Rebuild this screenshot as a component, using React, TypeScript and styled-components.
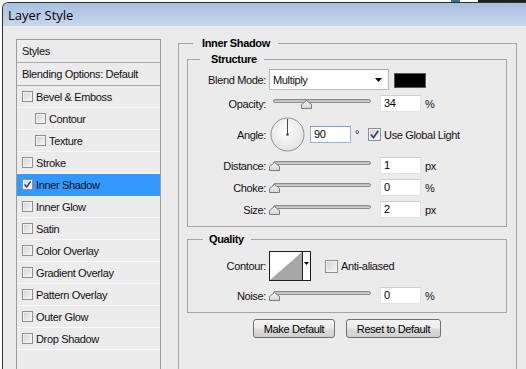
import React from "react";
import styled, { createGlobalStyle } from "styled-components";

const GlobalStyle = createGlobalStyle`
  html, body {
    margin: 0;
    padding: 0;
    background: #fff;
    overflow: hidden;
  }
  body {
    font-family: "Liberation Sans", Arial, sans-serif;
    font-size: 11px;
    letter-spacing: -0.35px;
    color: #111;
  }
`;

const Screen = styled.div`
  width: 526px;
  height: 369px;
  overflow: hidden;
`;

const Backdrop = styled.div`
  display: flex;
  height: 2px;
`;

const BackdropPiece = styled.div<{ $w: number; $c: string }>`
  width: ${(p) => p.$w}px;
  background: ${(p) => p.$c};
`;

const Window = styled.div`
  margin-left: 2px;
  width: 560px;
  height: 367px;
  border-top: 1px solid #2e3236;
  border-left: 1px solid #2e3236;
  border-top-left-radius: 6px;
  overflow: hidden;
  background: #ebebeb;
  display: flex;
  flex-direction: column;
`;

const TitleBar = styled.div`
  height: 23px;
  flex: none;
  display: flex;
  align-items: center;
  padding-left: 5px;
  background: linear-gradient(to bottom, #a8c0de 0%, #b8cce5 55%, #c7d8ec 100%);
  font-family: "Open Sans", "Noto Sans", sans-serif;
  font-size: 13px;
  letter-spacing: 0;
  color: #000;
`;

const Body = styled.div`
  flex: 1;
  display: flex;
  align-items: flex-start;
  padding: 10px 0 0 13px;
`;

const StylesPanel = styled.div`
  flex: none;
  width: 145px;
  height: 340px;
  margin-top: 3px;
  box-sizing: border-box;
  border: 1px solid #9c9c9c;
  background: #ececec;
`;

const PanelHeader = styled.div`
  height: 22px;
  line-height: 22px;
  padding-left: 5px;
  border-bottom: 1px solid #a9a9a9;
`;

const StyleItem = styled.div<{ $level: number; $active?: boolean }>`
  height: 21px;
  display: flex;
  align-items: center;
  gap: 3px;
  padding-left: ${(p) => 5 + p.$level * 13}px;
  border-bottom: 1px solid ${(p) => (p.$active ? "#3399ff" : "#fafafa")};
  background: ${(p) => (p.$active ? "#3399ff" : "transparent")};
`;

const Box = styled.span<{ $size?: number; $ml?: number }>`
  flex: none;
  width: ${(p) => p.$size ?? 11}px;
  height: ${(p) => p.$size ?? 11}px;
  margin-left: ${(p) => p.$ml ?? 0}px;
  box-sizing: border-box;
  border: 1px solid #8e8f8f;
  box-shadow: inset 0 0 0 1px #f2f2f2;
  background: linear-gradient(135deg, #d2d2d2 0%, #f7f7f7 100%);
  display: inline-flex;
  align-items: center;
  justify-content: center;
`;

const Group = styled.fieldset<{ $outer?: boolean; $pad: string; $mt: number }>`
  margin: ${(p) => p.$mt}px 0 0 0;
  min-width: 0;
  border: 1px solid #a4a4a4;
  padding: ${(p) => p.$pad};
  ${(p) =>
    p.$outer &&
    `
    flex: none;
    margin-left: 17px;
    width: 339px;
    height: 345px;
    box-sizing: border-box;
  `}
`;

const GroupTitle = styled.legend<{ $ml: number; $pl: number; $pr: number }>`
  font-weight: bold;
  line-height: 14px;
  height: 14px;
  margin-left: ${(p) => p.$ml}px;
  padding: 0 ${(p) => p.$pr}px 0 ${(p) => p.$pl}px;
  color: #000;
`;

const Rows = styled.div<{ $gap: number }>`
  display: flex;
  flex-direction: column;
  gap: ${(p) => p.$gap}px;
`;

const Row = styled.div<{ $h: number }>`
  display: flex;
  align-items: center;
  height: ${(p) => p.$h}px;
`;

const Label = styled.span`
  flex: none;
  width: 78px;
  margin-right: 3px;
  text-align: right;
`;

const Select = styled.div`
  flex: none;
  width: 120px;
  height: 21px;
  box-sizing: border-box;
  border: 1px solid #b9b9b9;
  border-top-color: #a9a9a9;
  background: #fff;
  display: flex;
  align-items: center;
  justify-content: space-between;
  padding: 0 6px 0 3px;
`;

const Swatch = styled.div`
  flex: none;
  width: 32px;
  height: 15px;
  margin-left: 5px;
  margin-top: 2px;
  box-sizing: border-box;
  border: 1px solid #5a5a5a;
  background: #000;
`;

const Slider = styled.div`
  flex: none;
  position: relative;
  width: 104px;
  height: 17px;
  padding-top: 4px;
  box-sizing: border-box;
`;

const Track = styled.div`
  height: 4px;
  margin: 0 2px 0 4px;
  box-sizing: border-box;
  border: 1px solid #8c8c8c;
  border-radius: 2px;
  background: linear-gradient(to bottom, #b4b4b4, #d6d6d6);
`;

const Thumb = styled.svg`
  position: absolute;
  top: 5px;
`;

const NumBox = styled.div<{ $focus?: boolean; $ml?: number }>`
  flex: none;
  width: 41px;
  height: 17px;
  margin-left: ${(p) => p.$ml ?? 7}px;
  box-sizing: border-box;
  border: 1px solid ${(p) => (p.$focus ? "#8fb3d9" : "#e3e3e3")};
  border-top-color: ${(p) => (p.$focus ? "#7a9fcb" : "#cfcfcf")};
  background: #fff;
  padding-left: 3px;
  line-height: 15px;
  color: #000;
`;

const Unit = styled.span<{ $ml?: number }>`
  margin-left: ${(p) => p.$ml ?? 4}px;
`;

const Degree = styled.span`
  margin: 0 9px 0 4px;
  align-self: flex-start;
  margin-top: 11px;
`;

const Dial = styled.svg`
  flex: none;
  margin-left: 1px;
`;

const Contour = styled.div`
  flex: none;
  width: 42px;
  height: 30px;
  box-sizing: border-box;
  border: 1px solid #1e1e1e;
  display: flex;
  background: #fff;
`;

const ContourArrow = styled.div`
  flex: none;
  width: 8px;
  border-left: 1px solid #1e1e1e;
  display: flex;
  justify-content: center;
  padding-top: 10px;
  box-sizing: border-box;
`;

const CheckText = styled.span`
  margin-left: 3px;
`;

const ButtonRow = styled.div`
  display: flex;
  justify-content: center;
  gap: 11px;
  margin-top: 6px;
`;

const Button = styled.button<{ $w: number }>`
  width: ${(p) => p.$w}px;
  height: 19px;
  padding: 0;
  border: 1px solid #707070;
  border-radius: 3px;
  background: linear-gradient(to bottom, #f3f3f3 0%, #ebebeb 48%, #dddddd 52%, #cfcfcf 100%);
  font-family: inherit;
  font-size: 11px;
  letter-spacing: inherit;
  color: #000;
`;

const CheckMark = ({ size }: { size: number }) => (
  <svg width={size - 2} height={size - 2} viewBox="0 0 9 9">
    <path d="M1.5 4.5 L3.7 7 L7.6 1.5" fill="none" stroke="#2b4a8a" strokeWidth="1.5" />
  </svg>
);

const CheckBox = ({ checked, size = 11, ml }: { checked?: boolean; size?: number; ml?: number }) => (
  <Box $size={size} $ml={ml}>{checked && <CheckMark size={size} />}</Box>
);

const ValueSlider = ({ value }: { value: number }) => (
  <Slider>
    <Track />
    <Thumb width="11" height="9" viewBox="0 0 11 9" style={{ left: (value / 100) * 93 }}>
      <defs>
        <linearGradient id="thumbFill" x1="0" y1="0" x2="0" y2="1">
          <stop offset="0" stopColor="#f7f7f7" />
          <stop offset="1" stopColor="#d4d4d4" />
        </linearGradient>
      </defs>
      <polygon points="5.5,0.5 10.5,4.5 10.5,8.5 0.5,8.5 0.5,4.5" fill="url(#thumbFill)" stroke="#7b7b7b" />
    </Thumb>
  </Slider>
);

const styleItems = [
  { name: "Bevel & Emboss", level: 0 },
  { name: "Contour", level: 1 },
  { name: "Texture", level: 1 },
  { name: "Stroke", level: 0 },
  { name: "Inner Shadow", level: 0, active: true },
  { name: "Inner Glow", level: 0 },
  { name: "Satin", level: 0 },
  { name: "Color Overlay", level: 0 },
  { name: "Gradient Overlay", level: 0 },
  { name: "Pattern Overlay", level: 0 },
  { name: "Outer Glow", level: 0 },
  { name: "Drop Shadow", level: 0 },
];

const sliderRows = [
  { label: "Distance:", value: 0, text: "1", unit: "px" },
  { label: "Choke:", value: 0, text: "0", unit: "%" },
  { label: "Size:", value: 0, text: "2", unit: "px" },
];

export default function App() {
  return (
    <Screen>
      <GlobalStyle />
      <Backdrop>
        <BackdropPiece $w={451} $c="#ffffff" />
        <BackdropPiece $w={9} $c="#3b7480" />
        <BackdropPiece $w={18} $c="#ffffff" />
        <BackdropPiece $w={48} $c="#1f1f1f" />
      </Backdrop>
      <Window>
        <TitleBar>Layer Style</TitleBar>
        <Body>
          <StylesPanel>
            <PanelHeader>Styles</PanelHeader>
            <PanelHeader>Blending Options: Default</PanelHeader>
            {styleItems.map((item) => (
              <StyleItem key={item.name} $level={item.level} $active={item.active}>
                <CheckBox checked={item.active} />
                <span>{item.name}</span>
              </StyleItem>
            ))}
          </StylesPanel>

          <Group $outer $pad="1px 9px 0 8px" $mt={0}>
            <GroupTitle $ml={6} $pl={9} $pr={8}>Inner Shadow</GroupTitle>

            <Group $pad="3px 0 8px 0" $mt={1}>
              <GroupTitle $ml={12} $pl={11} $pr={7}>Structure</GroupTitle>
              <Rows $gap={5}>
                <Row $h={21}>
                  <Label>Blend Mode:</Label>
                  <Select>
                    <span>Multiply</span>
                    <svg width="7" height="4" viewBox="0 0 7 4">
                      <polygon points="0,0 7,0 3.5,4" fill="#000" />
                    </svg>
                  </Select>
                  <Swatch />
                </Row>
                <Row $h={17}>
                  <Label>Opacity:</Label>
                  <ValueSlider value={34} />
                  <NumBox>34</NumBox>
                  <Unit>%</Unit>
                </Row>
                <Row $h={35}>
                  <Label>Angle:</Label>
                  <Dial width="35" height="35" viewBox="0 0 35 35">
                    <defs>
                      <radialGradient id="dialFill" cx="0.45" cy="0.4" r="0.6">
                        <stop offset="0" stopColor="#ffffff" />
                        <stop offset="1" stopColor="#e2e2e2" />
                      </radialGradient>
                    </defs>
                    <circle cx="17.5" cy="17.5" r="16.5" fill="url(#dialFill)" stroke="#8d8d8d" />
                    <line x1="17.5" y1="17.5" x2="17.5" y2="2" stroke="#4a4a4a" strokeWidth="1" />
                    <circle cx="17.5" cy="17.5" r="1.3" fill="#4a4a4a" />
                  </Dial>
                  <NumBox $focus $ml={5}>90</NumBox>
                  <Degree>°</Degree>
                  <CheckBox checked size={13} />
                  <CheckText>Use Global Light</CheckText>
                </Row>
                {sliderRows.map((r) => (
                  <Row $h={17} key={r.label}>
                    <Label>{r.label}</Label>
                    <ValueSlider value={r.value} />
                    <NumBox>{r.text}</NumBox>
                    <Unit>{r.unit}</Unit>
                  </Row>
                ))}
              </Rows>
            </Group>

            <Group $pad="5px 0 8px 0" $mt={5}>
              <GroupTitle $ml={15} $pl={6} $pr={7}>Quality</GroupTitle>
              <Rows $gap={6}>
                <Row $h={30}>
                  <Label>Contour:</Label>
                  <Contour>
                    <svg width="32" height="28" viewBox="0 0 32 28">
                      <polygon points="0,28 32,0 32,28" fill="#a6a6a6" />
                    </svg>
                    <ContourArrow>
                      <svg width="5" height="3" viewBox="0 0 5 3">
                        <polygon points="0,0 5,0 2.5,3" fill="#000" />
                      </svg>
                    </ContourArrow>
                  </Contour>
                  <CheckBox size={13} ml={14} />
                  <CheckText>Anti-aliased</CheckText>
                </Row>
                <Row $h={17}>
                  <Label>Noise:</Label>
                  <ValueSlider value={0} />
                  <NumBox>0</NumBox>
                  <Unit>%</Unit>
                </Row>
              </Rows>
            </Group>

            <ButtonRow>
              <Button $w={82}>Make Default</Button>
              <Button $w={95}>Reset to Default</Button>
            </ButtonRow>
          </Group>
        </Body>
      </Window>
    </Screen>
  );
}
